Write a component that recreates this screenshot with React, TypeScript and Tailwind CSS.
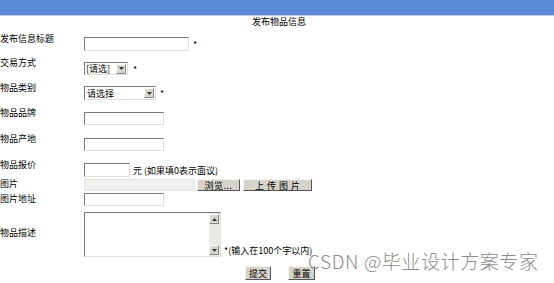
import React from "react";

const font = { fontFamily: '"Noto Sans CJK SC", "Noto Sans", sans-serif' };

function Arrow({ dir }: { dir: "up" | "down" }) {
  return (
    <svg width="5" height="3" viewBox="0 0 5 3">
      {dir === "down" ? <path d="M0 0h5L2.5 3z" fill="#333" /> : <path d="M0 3h5L2.5 0z" fill="#333" />}
    </svg>
  );
}

function ArrowBtn({ dir }: { dir: "up" | "down" }) {
  return (
    <div className="w-[10px] h-[10px] bg-[#d8d5cc] border border-t-white border-l-white border-r-[#888] border-b-[#888] flex items-center justify-center">
      <Arrow dir={dir} />
    </div>
  );
}

const inset = "border border-t-[#7a7a7a] border-l-[#7a7a7a] border-r-[#e2e0d8] border-b-[#e2e0d8] bg-white outline-none";
const btn =
  "bg-[#d6d3ca] border border-t-[#f4f4f4] border-l-[#f4f4f4] border-r-[#555] border-b-[#555] text-[9px] leading-none text-black flex items-center justify-center";

function Label({ children, mt }: { children: React.ReactNode; mt: string }) {
  return <div className={`w-[84px] shrink-0 text-[9px] leading-[11px] text-black ${mt}`}>{children}</div>;
}

export default function App() {
  return (
    <div className="w-[554px] h-[283px] bg-white relative overflow-hidden" style={font}>
      <div className="h-[15px] bg-[#5a8ad6]" />
      <div className="h-[1px] bg-[#c4d0e2]" />
      <div className="h-[14px] pl-[4px] text-center text-[9px] leading-[11px] text-black">发布物品信息</div>

      <div className="flex h-[25px]">
        <Label mt="mt-[3px]">发布信息标题</Label>
        <div className="flex items-center mt-[7px] h-[14px]">
          <input className={`w-[105px] h-[14px] ${inset}`} />
          <span className="text-[9px] ml-[4px] mt-[2px]">*</span>
        </div>
      </div>

      <div className="flex h-[25px]">
        <Label mt="mt-[2px]">交易方式</Label>
        <div className="flex items-center mt-[7px] h-[13px]">
          <div className={`w-[44px] h-[13px] ${inset} flex items-center justify-between pl-[1px] pr-[1px]`}>
            <span className="text-[9px] leading-none">[请选]</span>
            <ArrowBtn dir="down" />
          </div>
          <span className="text-[9px] ml-[5px] mt-[2px]">*</span>
        </div>
      </div>

      <div className="flex h-[25px]">
        <Label mt="mt-[2px]">物品类别</Label>
        <div className="flex items-center mt-[6px] h-[14px]">
          <div className={`w-[72px] h-[14px] ${inset} flex items-center justify-between pl-[2px] pr-[1px]`}>
            <span className="text-[9px] leading-none">请选择</span>
            <ArrowBtn dir="down" />
          </div>
          <span className="text-[9px] ml-[4px] mt-[2px]">*</span>
        </div>
      </div>

      <div className="flex h-[26px]">
        <Label mt="mt-[2px]">物品品牌</Label>
        <input className={`mt-[7px] w-[80px] h-[13px] ${inset}`} />
      </div>

      <div className="flex h-[26px]">
        <Label mt="mt-[2px]">物品产地</Label>
        <input className={`mt-[7px] w-[80px] h-[13px] ${inset}`} />
      </div>

      <div className="flex h-[21px]">
        <Label mt="mt-[2px]">物品报价</Label>
        <div className="flex items-center mt-[6px] h-[14px]">
          <input className={`w-[46px] h-[14px] ${inset}`} />
          <span className="text-[9px] leading-none ml-[3px] mt-[1px] text-black">元 (如果填0表示面议)</span>
        </div>
      </div>

      <div className="flex h-[14px]">
        <Label mt="mt-0">图片</Label>
        <div className="flex mt-[1px] h-[12px]">
          <div className="w-[111px] h-[12px] bg-[#f0f0ee] border border-[#e4e4e2]" />
          <div className={`${btn} ml-[2px] w-[43px] h-[12px] text-[#333] tracking-[0.5px]`}>浏览...</div>
          <div className={`${btn} ml-[3px] w-[69px] h-[12px] tracking-[3px] pl-[3px]`}>上传图片</div>
        </div>
      </div>

      <div className="flex h-[15px]">
        <Label mt="mt-[1px]">图片地址</Label>
        <input className={`mt-[1px] w-[80px] h-[13px] ${inset}`} />
      </div>

      <div className="flex h-[50px]">
        <Label mt="mt-[20px]">物品描述</Label>
        <div className="flex items-end mt-[2px]">
          <div className={`w-[137px] h-[45px] ${inset} flex`}>
            <textarea className="flex-1 resize-none outline-none border-0 bg-white overflow-hidden" />
            <div className="w-[11px] bg-[#ebe9e3] flex flex-col justify-between pt-[1px] pb-[1px]">
              <ArrowBtn dir="up" />
              <ArrowBtn dir="down" />
            </div>
          </div>
          <span className="text-[9px] leading-none ml-[3px] mb-[2px] text-black">*(输入在100个字以内)</span>
        </div>
      </div>

      <div className="flex pl-[245px] pt-[9px]">
        <div className={`${btn} w-[26px] h-[14px]`}>提交</div>
        <div className={`${btn} ml-[17px] w-[27px] h-[14px]`}>重置</div>
      </div>

      <div className="absolute left-[308px] top-[249px] text-[19px] leading-[24px] tracking-[0.6px] text-[#8c8c8c] whitespace-nowrap font-light">
        CSDN @毕业设计方案专家
      </div>
    </div>
  );
}
